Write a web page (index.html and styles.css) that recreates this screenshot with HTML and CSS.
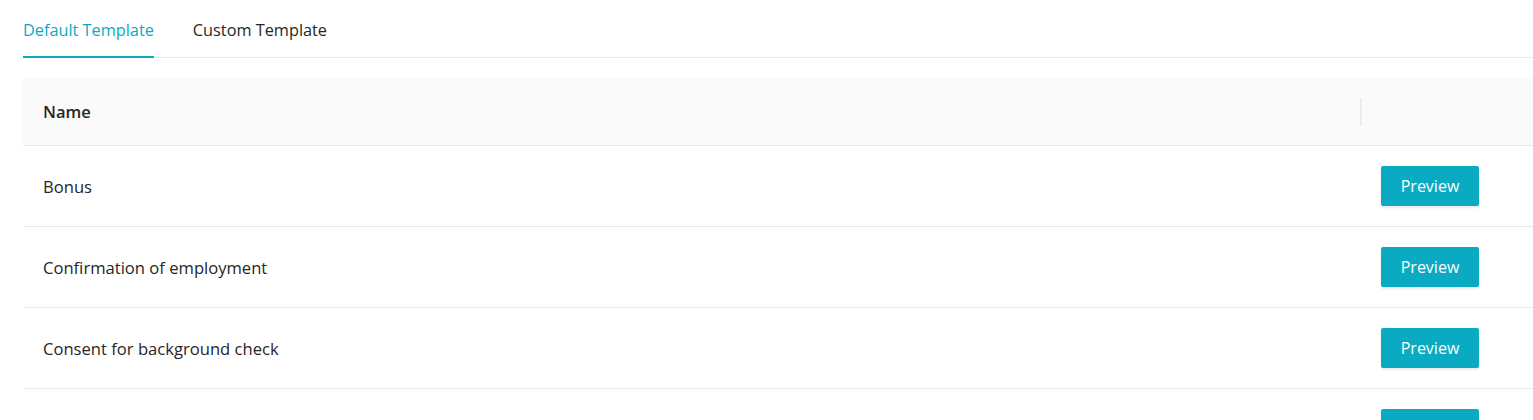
FILE: index.html
```html
<!DOCTYPE html>
<html lang="en">
<head>
<meta charset="utf-8">
<title>Templates</title>
<link rel="stylesheet" href="styles.css">
</head>
<body>
<div class="page">
  <div class="tabs">
    <div class="tab active">Default Template</div>
    <div class="tab">Custom Template</div>
  </div>
  <div class="table">
    <div class="row head">
      <div class="cell name">Name</div>
      <div class="cell action"></div>
    </div>
    <div class="row">
      <div class="cell name">Bonus</div>
      <div class="cell action"><button class="btn">Preview</button></div>
    </div>
    <div class="row">
      <div class="cell name">Confirmation of employment</div>
      <div class="cell action"><button class="btn">Preview</button></div>
    </div>
    <div class="row">
      <div class="cell name">Consent for background check</div>
      <div class="cell action"><button class="btn">Preview</button></div>
    </div>
    <div class="row">
      <div class="cell name"></div>
      <div class="cell action"><button class="btn" aria-label="Preview"></button></div>
    </div>
  </div>
</div>
</body>
</html>
```
FILE: styles.css
```css
html, body {
  margin: 0;
  padding: 0;
  background: #fff;
  overflow: hidden;
}
body {
  font-family: "Open Sans", "Noto Sans", sans-serif;
  font-size: 16.6px;
  color: #262626;
}
.page {
  padding: 8px 0 0 23px;
}
.tabs {
  display: flex;
  gap: 39px;
  border-bottom: 1px solid #e8e8e8;
  height: 49px;
}
.tab {
  font-size: 16.3px;
  line-height: 44px;
  color: #262626;
  box-sizing: border-box;
  height: 49px;
}
.tab.active {
  color: #0aabc2;
  border-bottom: 2px solid #0aabc2;
  margin-bottom: -1px;
  height: 50px;
}
.table {
  margin-top: 20px;
}
.row {
  display: flex;
  height: 80px;
  border-bottom: 1px solid #e8e8e8;
  align-items: center;
}
.row.head {
  height: 67px;
  background: #fafafa;
  font-weight: 600;
  font-size: 16.5px;
}
.cell.name {
  flex: 1;
  padding-left: 20px;
}
.cell.action {
  width: 173px;
  box-sizing: border-box;
  padding-left: 21px;
  height: 100%;
  display: flex;
  align-items: center;
}
.row.head .cell.action {
  height: 28px;
  border-left: 2px solid #ececec;
}
.btn {
  width: 98px;
  height: 40px;
  border: none;
  border-radius: 2px;
  background: #0aabc2;
  color: #fff;
  font-family: inherit;
  font-size: 16px;
  box-shadow: 0 2px 2px rgba(0,0,0,0.08);
  padding: 0;
}
```
